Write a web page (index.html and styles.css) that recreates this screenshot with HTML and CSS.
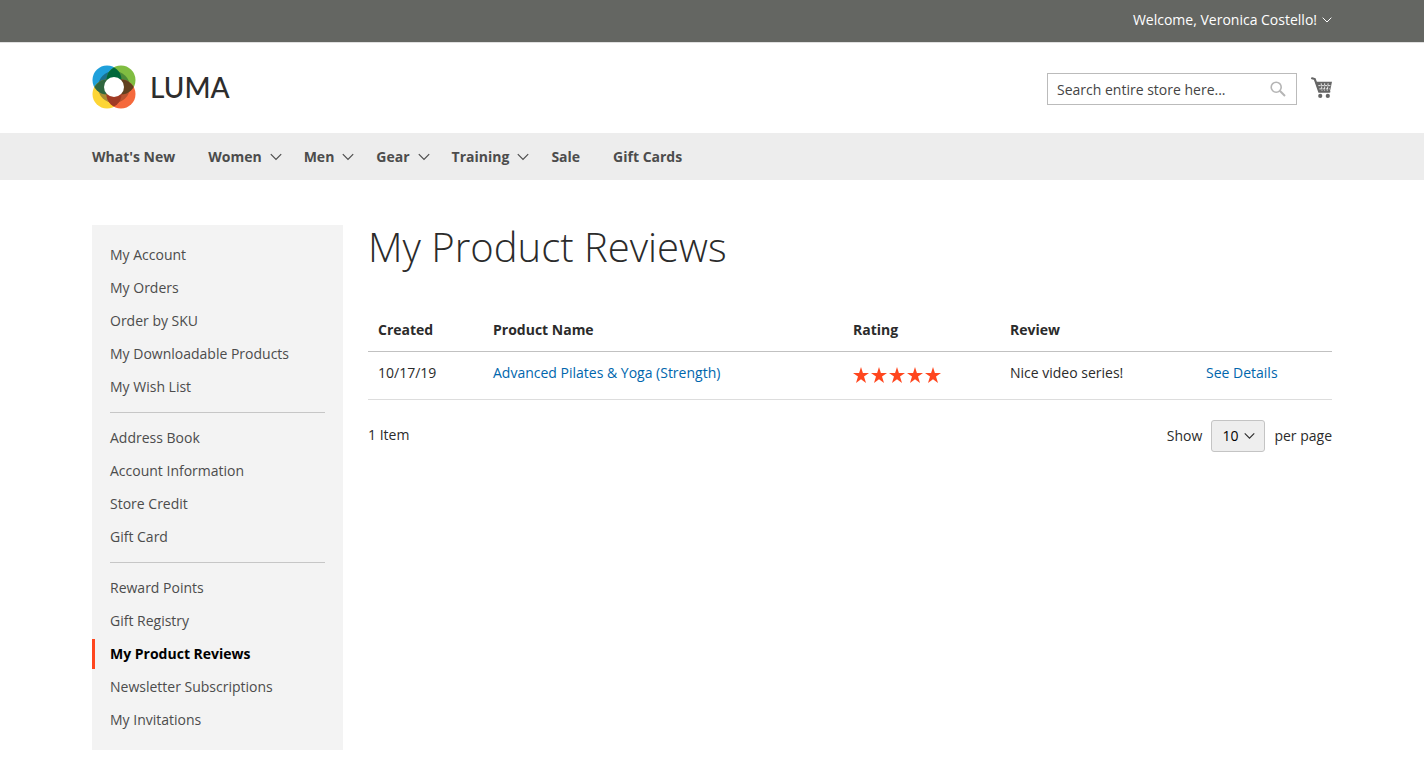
FILE: index.html
```html
<!DOCTYPE html>
<html lang="en">
<head>
<meta charset="utf-8">
<meta name="viewport" content="width=device-width, initial-scale=1">
<title>My Product Reviews</title>
<link rel="stylesheet" href="styles.css">
</head>
<body>
<svg class="defs" aria-hidden="true">
  <symbol id="chevron" viewBox="0 0 12 8"><path d="M.8 1.2 6 6.4l5.2-5.2" fill="none" stroke="currentColor" stroke-width="1.2"/></symbol>
  <symbol id="star" viewBox="0 0 16 16"><path d="M8 0l1.9 6H16l-5 3.600 2 6.400-5-3.800L3 16l2-6.400L0 6h6.100z" fill="currentColor"/></symbol>
</svg>
<header>
  <div class="topbar">
    <div class="wrap topbar-inner">
      <button class="welcome" type="button">Welcome, Veronica Costello!<svg class="chevron-small"><use href="#chevron"/></svg></button>
    </div>
  </div>
  <div class="wrap brandbar">
    <a class="logo" href="#" aria-label="Luma home">
      <svg class="logo-mark" viewBox="0 0 44 44" aria-hidden="true">
        <defs>
          <clipPath id="clip-tl"><circle cx="15" cy="15" r="14.500"/></clipPath>
          <clipPath id="clip-tr"><circle cx="29" cy="15" r="14.500"/></clipPath>
          <clipPath id="clip-bl"><circle cx="15" cy="29" r="14.500"/></clipPath>
          <clipPath id="clip-br"><circle cx="29" cy="29" r="14.500"/></clipPath>
        </defs>
        <circle cx="15" cy="15" r="14.500" fill="#1fa0db"/>
        <circle cx="29" cy="15" r="14.500" fill="#80bd41"/>
        <circle cx="15" cy="29" r="14.500" fill="#fdd535"/>
        <circle cx="29" cy="29" r="14.500" fill="#f5693c"/>
        <circle cx="22" cy="22" r="16" fill="#1b708c" clip-path="url(#clip-tl)"/>
        <circle cx="22" cy="22" r="16" fill="#4d8b38" clip-path="url(#clip-tr)"/>
        <circle cx="22" cy="22" r="16" fill="#a88c35" clip-path="url(#clip-bl)"/>
        <circle cx="22" cy="22" r="16" fill="#b9532f" clip-path="url(#clip-br)"/>
        <circle cx="29" cy="15" r="14.500" fill="#00683b" clip-path="url(#clip-tl)"/>
        <circle cx="15" cy="29" r="14.500" fill="#2f6640" clip-path="url(#clip-tl)"/>
        <circle cx="29" cy="29" r="14.500" fill="#60401f" clip-path="url(#clip-tr)"/>
        <circle cx="29" cy="29" r="14.500" fill="#a03b24" clip-path="url(#clip-bl)"/>
        <circle cx="22" cy="22" r="10" fill="#fff"/>
      </svg>
      <span class="logo-name">LUMA</span>
    </a>
    <div class="tools">
      <form class="search" role="search">
        <input class="search-input" type="text" aria-label="Search" placeholder="Search entire store here...">
        <button class="search-button" type="button" aria-label="Search"><svg class="search-icon" viewBox="0 0 16 16"><circle cx="6.200" cy="6.200" r="5" fill="none" stroke="currentColor" stroke-width="1.600"/><path d="M9.800 9.800 15 15" stroke="currentColor" stroke-width="2"/></svg></button>
      </form>
      <a class="cart" href="#" aria-label="My Cart"><svg class="cart-icon" viewBox="0 0 20 20"><path d="M1 1.200 3.600 2 7.800 14h9.700" fill="none" stroke="currentColor" stroke-width="2" stroke-linecap="round"/><path d="M4 4.500h16L18 14H7.500z" fill="currentColor"/><path d="M7 8.200h11.500M8 11.300h10M9.700 6l.8 7M13 6v7M16.300 6l-.8 7" stroke="#fff" stroke-width=".8" stroke-dasharray="2.200 .9"/><circle cx="8.800" cy="18" r="2" fill="currentColor"/><circle cx="16" cy="18" r="2" fill="currentColor"/></svg></a>
    </div>
  </div>
  <nav class="mainnav" aria-label="Main">
    <ul class="wrap nav-list">
      <li><a href="#">What's New</a></li>
      <li><a class="parent" href="#">Women<svg class="chevron"><use href="#chevron"/></svg></a></li>
      <li><a class="parent" href="#">Men<svg class="chevron"><use href="#chevron"/></svg></a></li>
      <li><a class="parent" href="#">Gear<svg class="chevron"><use href="#chevron"/></svg></a></li>
      <li><a class="parent" href="#">Training<svg class="chevron"><use href="#chevron"/></svg></a></li>
      <li><a href="#">Sale</a></li>
      <li><a href="#">Gift Cards</a></li>
    </ul>
  </nav>
</header>
<div class="wrap page">
  <nav class="sidebar" aria-label="Account">
    <ul class="side-group">
      <li><a href="#">My Account</a></li>
      <li><a href="#">My Orders</a></li>
      <li><a href="#">Order by SKU</a></li>
      <li><a href="#">My Downloadable Products</a></li>
      <li><a href="#">My Wish List</a></li>
    </ul>
    <ul class="side-group">
      <li><a href="#">Address Book</a></li>
      <li><a href="#">Account Information</a></li>
      <li><a href="#">Store Credit</a></li>
      <li><a href="#">Gift Card</a></li>
    </ul>
    <ul class="side-group">
      <li><a href="#">Reward Points</a></li>
      <li><a href="#">Gift Registry</a></li>
      <li><a class="current" href="#" aria-current="page">My Product Reviews</a></li>
      <li><a href="#">Newsletter Subscriptions</a></li>
      <li><a href="#">My Invitations</a></li>
    </ul>
  </nav>
  <main class="content">
    <h1>My Product Reviews</h1>
    <table class="reviews">
      <thead>
        <tr><th class="col-date">Created</th><th class="col-name">Product Name</th><th class="col-rating">Rating</th><th class="col-review">Review</th><th aria-label="Actions"></th></tr>
      </thead>
      <tbody>
        <tr>
          <td>10/17/19</td>
          <td><a href="#">Advanced Pilates &amp; Yoga (Strength)</a></td>
          <td><span class="stars" role="img" aria-label="5 out of 5 stars"><svg><use href="#star"/></svg><svg><use href="#star"/></svg><svg><use href="#star"/></svg><svg><use href="#star"/></svg><svg><use href="#star"/></svg></span></td>
          <td>Nice video series!</td>
          <td><a href="#">See Details</a></td>
        </tr>
      </tbody>
    </table>
    <div class="toolbar">
      <p class="amount">1 Item</p>
      <div class="limiter">
        <label for="limit">Show</label>
        <span class="select-box"><select id="limit"><option>10</option><option>20</option><option>50</option></select><svg class="select-chevron"><use href="#chevron"/></svg></span>
        <span>per page</span>
      </div>
    </div>
  </main>
</div>
</body>
</html>
```
FILE: styles.css
```css
* { box-sizing: border-box; }

body {
  margin: 0;
  background: #fff;
  color: #2b2b2b;
  font: 14px/20px "Open Sans", "Noto Sans", sans-serif;
}

ul { margin: 0; padding: 0; list-style: none; }
a { color: #0066ad; text-decoration: none; }
button, input, select { font: inherit; }
.defs { position: absolute; width: 0; height: 0; }

.wrap { max-width: 1280px; margin: 0 auto; padding: 0 20px; }

.topbar { background: #646662; border-bottom: 1px solid #e0e0e0; }
.topbar-inner { display: flex; justify-content: flex-end; padding-top: 10px; padding-bottom: 12px; }
.welcome {
  display: flex;
  align-items: center;
  gap: 5px;
  padding: 0;
  border: 0;
  background: none;
  color: #fff;
  font-weight: 500;
}
.chevron-small { width: 10px; height: 8px; }

.brandbar { display: flex; justify-content: space-between; align-items: flex-start; padding-top: 22px; padding-bottom: 24px; }
.logo { display: flex; align-items: center; gap: 14px; color: #2d2d2d; }
.logo-mark { width: 44px; height: 44px; }
.logo-name { font-family: Lato, sans-serif; font-size: 28px; font-weight: 500; line-height: 42px; }
.tools { display: flex; gap: 14px; padding-top: 8px; }
.search { display: flex; width: 250px; height: 32px; border: 1px solid #bbb; background: #fff; }
.search-input { flex: 1; min-width: 0; padding: 2px 0 0 9px; border: 0; outline: 0; background: none; color: #2b2b2b; }
.search-input::placeholder { color: #444; opacity: 1; }
.search-button { display: flex; align-items: center; padding: 0 10px; border: 0; background: none; color: #b5b5b5; }
.search-icon { width: 16px; height: 16px; }
.cart { padding-top: 4px; color: #666; }
.cart-icon { display: block; width: 21px; height: 21px; }

.mainnav { background: #ededed; }
.nav-list { display: flex; line-height: 47px; }
.nav-list a { display: flex; align-items: center; margin-right: 33px; color: #4c4c4c; font-weight: 700; }
.nav-list .parent { gap: 8px; margin-right: 22px; }
.chevron { width: 12px; height: 8px; }

.page { display: flex; align-items: flex-start; gap: 25px; padding-top: 45px; padding-bottom: 32px; }
.sidebar { flex: 0 0 251px; padding: 15px 0; background: #f3f3f3; }
.side-group + .side-group::before { content: ""; display: block; margin: 10px 18px; border-top: 1px solid #c6c6c6; }
.side-group li { margin-bottom: 3px; }
.side-group li:last-child { margin-bottom: 0; }
.side-group a { display: block; padding: 5px 18px 5px 15px; border-left: 3px solid transparent; color: #4c4c4c; }
.side-group .current { border-color: #ff461e; color: #000; font-weight: 700; }

.content { flex: 1; min-width: 0; }
h1 { margin: 0 0 40px; font-size: 40px; line-height: 44px; font-weight: 300; }
.reviews { width: 100%; table-layout: fixed; border-collapse: collapse; text-align: left; }
.reviews th { padding: 11px 10px; border-bottom: 1px solid #c1c1c1; font-weight: 700; }
.reviews td { height: 48px; padding: 11px 10px; border-bottom: 1px solid #ddd; vertical-align: top; }
.col-date { width: 115px; }
.col-name { width: 360px; }
.col-rating { width: 157px; }
.col-review { width: 196px; }
.stars { display: flex; gap: 2px; padding-top: 4px; color: #ff461e; }
.stars svg { width: 16px; height: 16px; }

.toolbar { display: flex; justify-content: space-between; padding-top: 20px; }
.amount { margin: 0; padding-top: 5px; }
.limiter { display: flex; align-items: center; gap: 9px; }
.select-box { display: grid; align-items: center; }
.select-box select {
  grid-area: 1 / 1;
  width: 54px;
  height: 32px;
  padding: 0 24px 0 10px;
  border: 1px solid #c4c4c4;
  border-radius: 3px;
  background: #eee;
  color: #000;
  appearance: none;
}
.select-chevron { grid-area: 1 / 1; justify-self: end; width: 11px; height: 8px; margin-right: 10px; pointer-events: none; }
```
